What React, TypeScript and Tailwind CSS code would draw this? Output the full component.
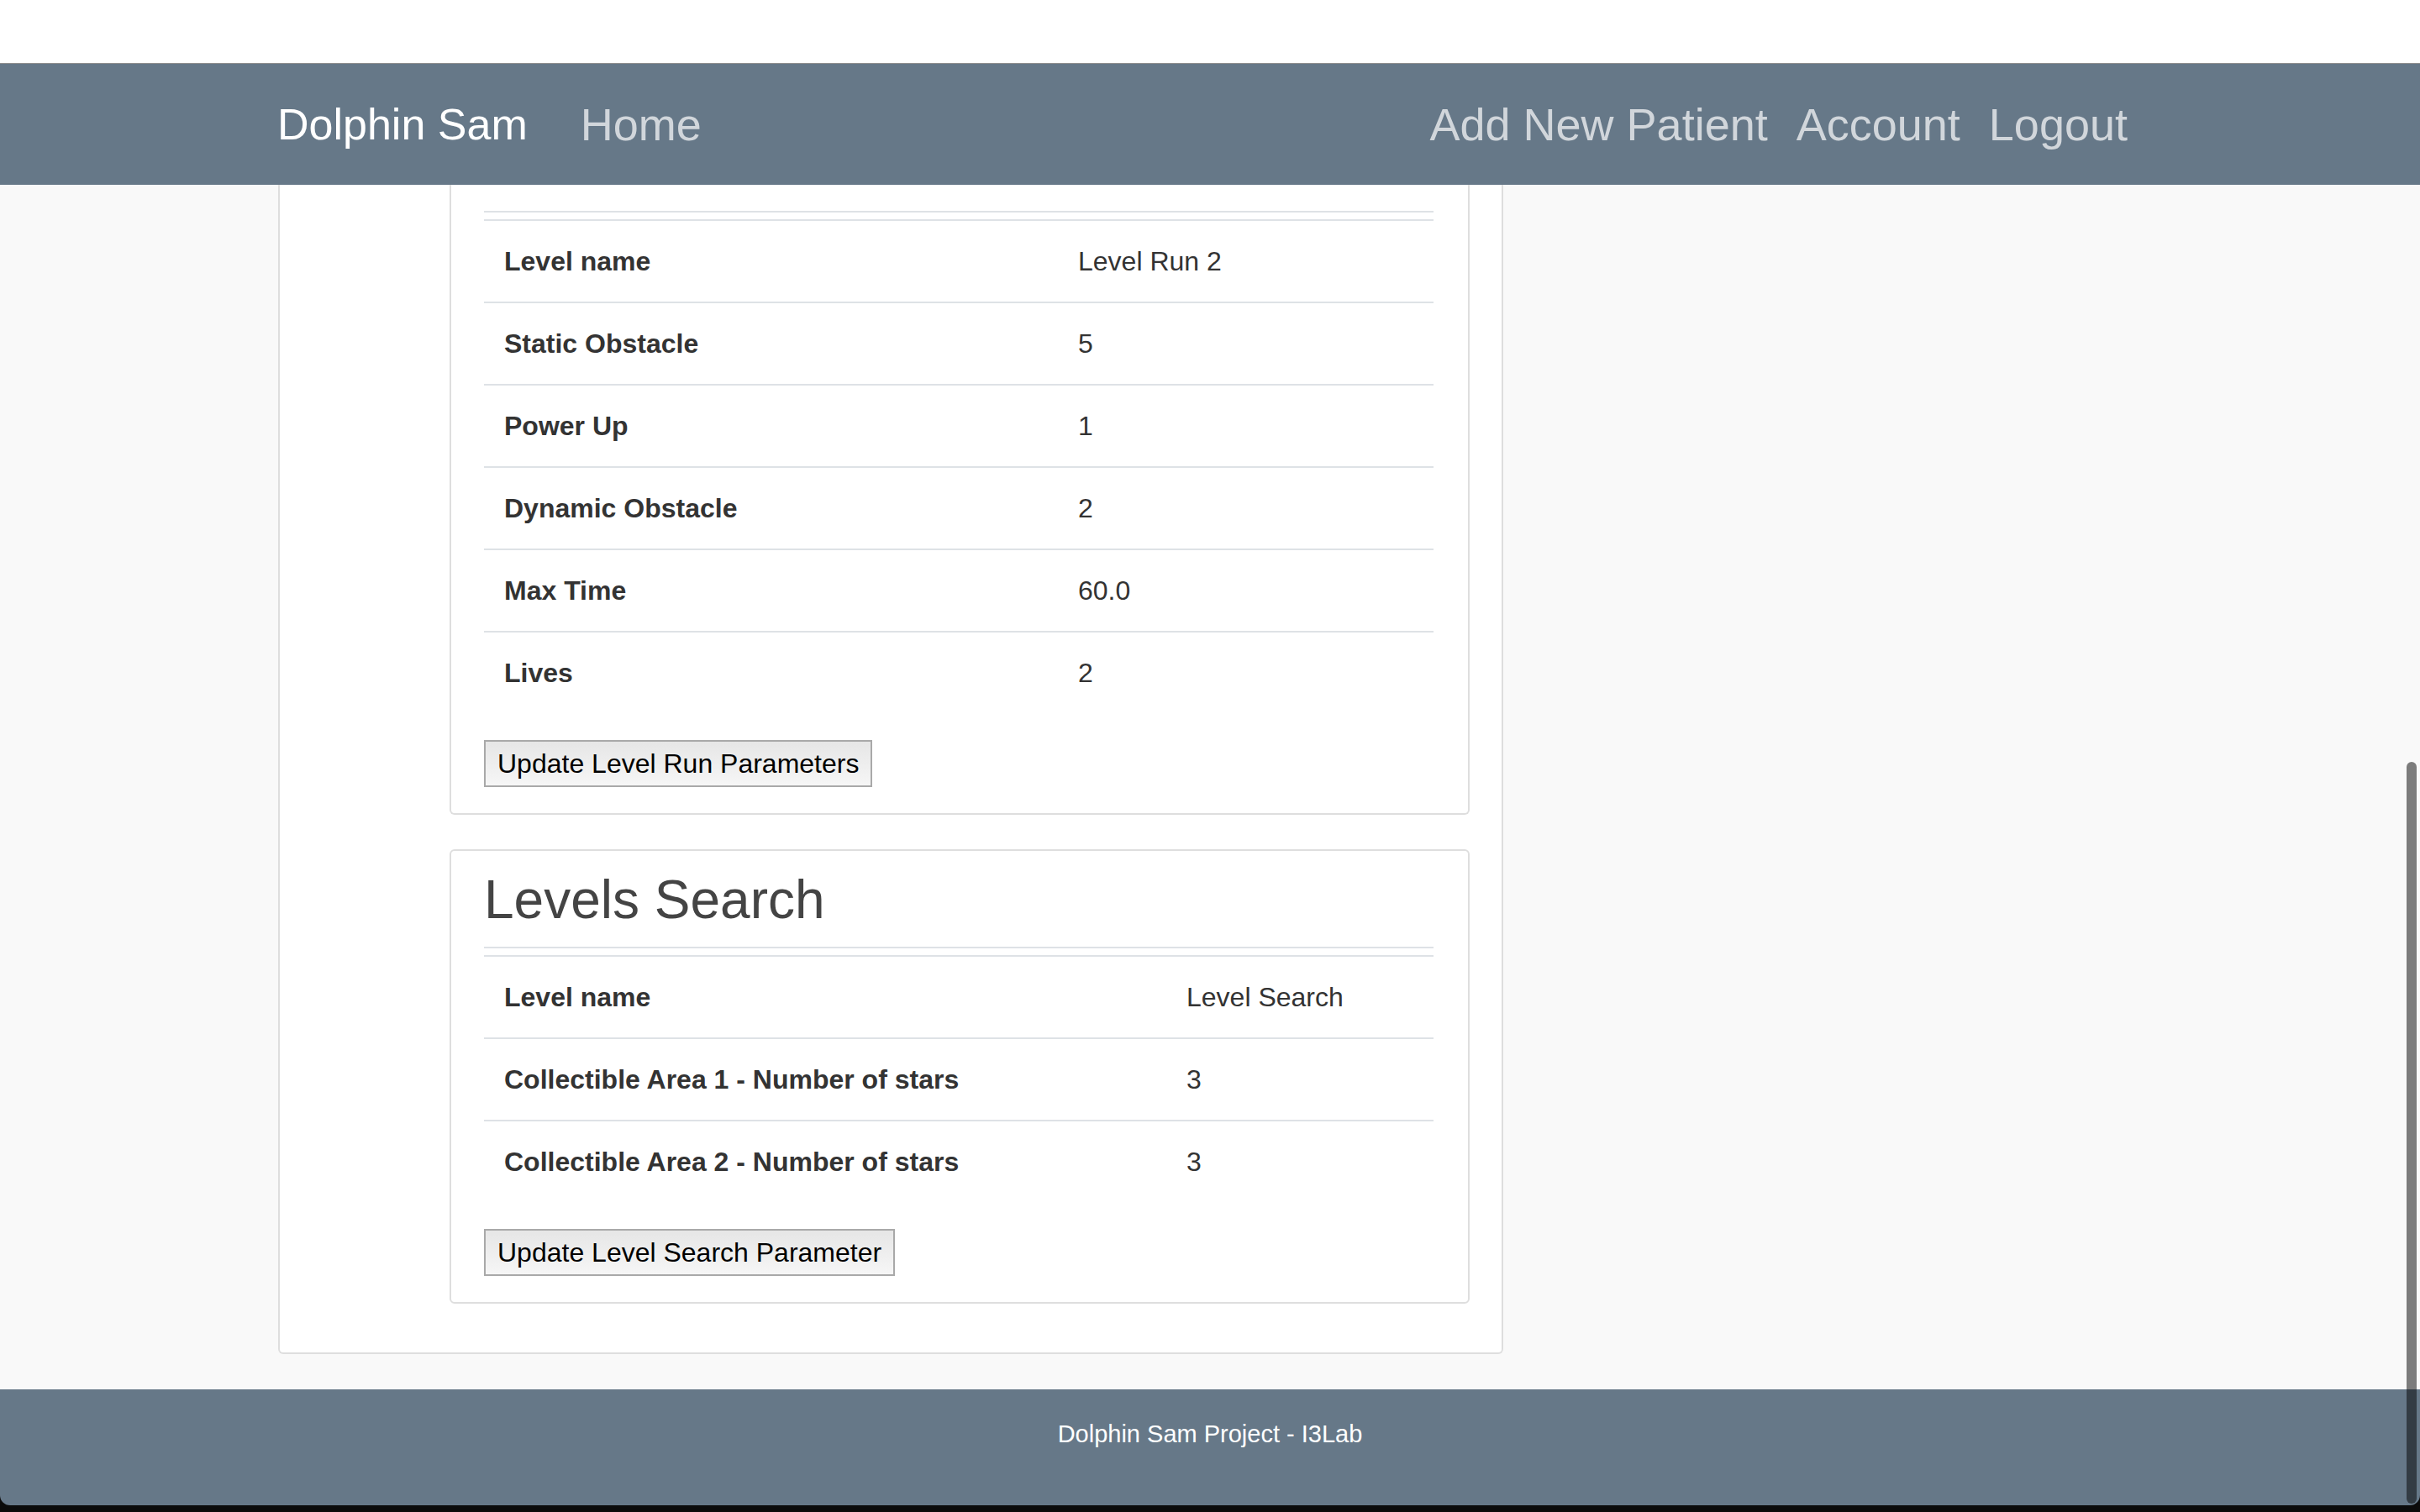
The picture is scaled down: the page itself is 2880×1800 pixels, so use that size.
const runRows = [
  { label: 'Level name', value: 'Level Run 2' },
  { label: 'Static Obstacle', value: '5' },
  { label: 'Power Up', value: '1' },
  { label: 'Dynamic Obstacle', value: '2' },
  { label: 'Max Time', value: '60.0' },
  { label: 'Lives', value: '2' },
]

const searchRows = [
  { label: 'Level name', value: 'Level Search' },
  { label: 'Collectible Area 1 - Number of stars', value: '3' },
  { label: 'Collectible Area 2 - Number of stars', value: '3' },
]

type Row = { label: string; value: string }

function ParamTable({ rows, labelWidth }: { rows: Row[]; labelWidth: string }) {
  return (
    <>
      <div className="h-[2px] bg-[#dee2e6]" />
      <table className="mt-[8px] w-full table-fixed border-collapse">
        <colgroup>
          <col className={labelWidth} />
          <col />
        </colgroup>
        <tbody>
          {rows.map((row) => (
            <tr key={row.label}>
              <td className="border-t-2 border-[#dee2e6] px-[24px] py-[24px] text-[32px] font-bold leading-[48px] text-[#333]">
                {row.label}
              </td>
              <td className="border-t-2 border-[#dee2e6] px-[24px] py-[24px] text-[32px] leading-[48px] text-[#333]">
                {row.value}
              </td>
            </tr>
          ))}
        </tbody>
      </table>
    </>
  )
}

function UpdateButton({ children }: { children: React.ReactNode }) {
  return (
    <button className="mt-[32px] block h-[56px] border-2 border-[#a9a9a9] bg-gradient-to-b from-[#e6e6e6] to-[#f6f6f6] px-[14px] text-[32px] leading-[38px] text-black">
      {children}
    </button>
  )
}

export default function App() {
  return (
    <div className="relative flex min-h-screen flex-col bg-[#f9f9f9] font-['Liberation_Sans',Arial,sans-serif]">
      <div className="h-[76px] border-b border-[#8f8f8f] bg-white" />

      <nav className="h-[144px] bg-[#667888]">
        <div className="mx-auto flex h-full w-[2220px] items-center">
          <a className="text-[52px] leading-none text-white">Dolphin Sam</a>
          <a className="ml-[63px] text-[54px] leading-none text-[#d1d6db]">Home</a>
          <div className="ml-auto flex items-center gap-[34px] pr-[18px] text-[54px] leading-none text-[#d1d6db]">
            <a>Add New Patient</a>
            <a>Account</a>
            <a>Logout</a>
          </div>
        </div>
      </nav>

      <main className="h-[1434px] pb-[42px]">
        <div className="ml-[331px] w-[1458px] rounded-b-[6px] border-x-2 border-b-2 border-[#dedede] bg-white pb-[58px] pl-[202px] pr-[38px]">
          <section className="rounded-b-[6px] border-x-2 border-b-2 border-[#dedede] pb-[31px] pl-[39px] pr-[41px] pt-[31px]">
            <ParamTable rows={runRows} labelWidth="w-[683px]" />
            <UpdateButton>Update Level Run Parameters</UpdateButton>
          </section>

          <section className="mt-[41px] rounded-[6px] border-2 border-[#dedede] pb-[31px] pl-[39px] pr-[41px] pt-[20px]">
            <h2 className="mb-[18px] text-[64px] leading-[76px] text-[#444]">Levels Search</h2>
            <ParamTable rows={searchRows} labelWidth="w-[812px]" />
            <UpdateButton>Update Level Search Parameter</UpdateButton>
          </section>
        </div>
      </main>

      <div className="bg-[#0b0b0b]">
        <footer className="h-[138px] rounded-b-[12px] bg-[#667888] pt-[32px] text-center text-[29px] leading-[42px] text-white">
          Dolphin Sam Project - I3Lab
        </footer>
        <div className="h-[8px]" />
      </div>

      <div className="absolute right-[4px] top-[907px] h-[883px] w-[12px] rounded-full bg-black/50" />
    </div>
  )
}
